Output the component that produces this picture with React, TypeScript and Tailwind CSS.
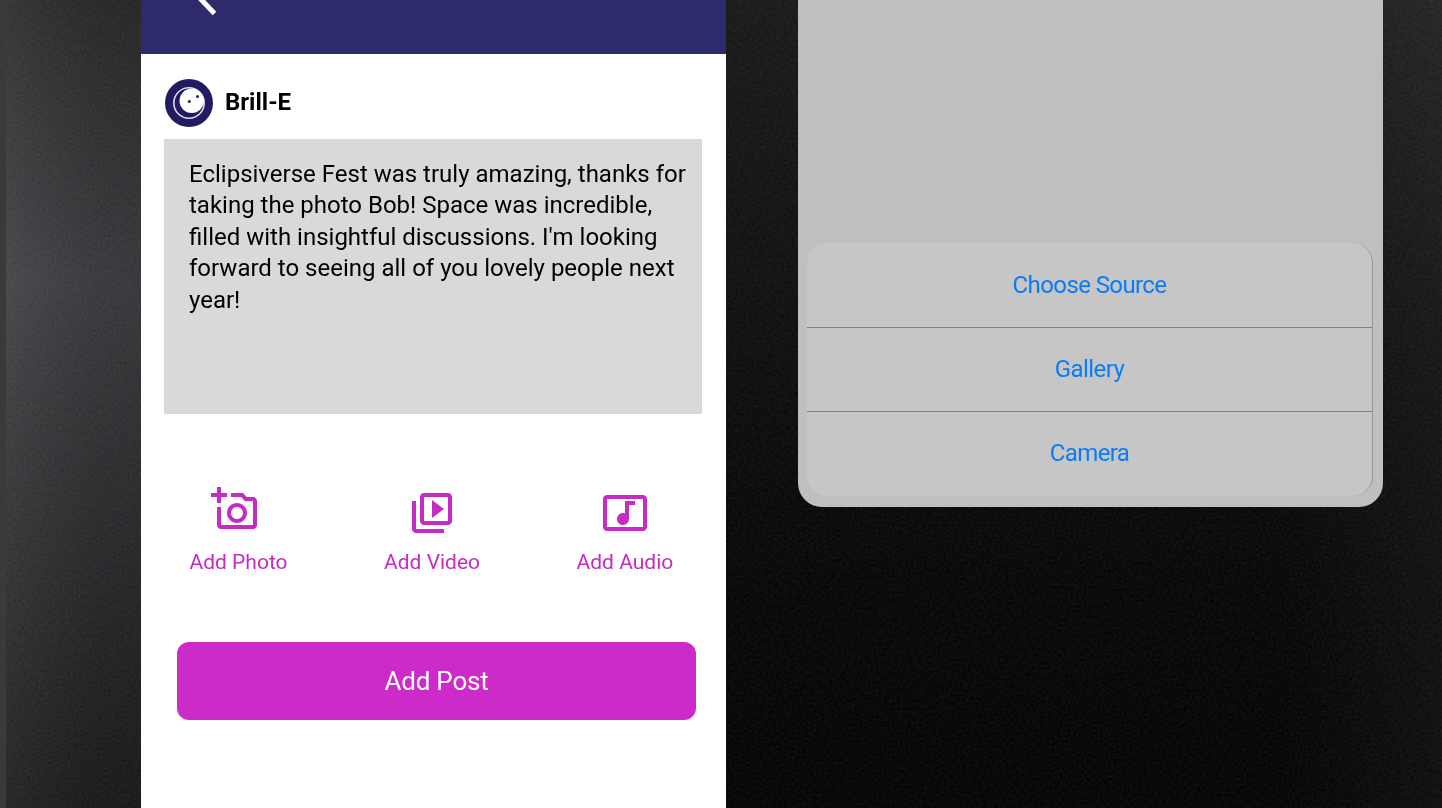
const photoPath =
  'M21 6h-3.17L16 4h-6v2h5.12l1.83 2H21v12H5v-9H3v9c0 1.1.9 2 2 2h16c1.1 0 2-.9 2-2V8c0-1.1-.9-2-2-2zM8 14c0 2.76 2.24 5 5 5s5-2.24 5-5-2.24-5-5-5-5 2.24-5 5zm5-3c1.65 0 3 1.35 3 3s-1.35 3-3 3-3-1.35-3-3 1.35-3 3-3zM5 6h3V4H5V1H3v3H0v2h3v3h2z';
const videoPath =
  'M4 6H2v14c0 1.1.9 2 2 2h14v-2H4V6zm16-4H8c-1.1 0-2 .9-2 2v12c0 1.1.9 2 2 2h12c1.1 0 2-.9 2-2V4c0-1.1-.9-2-2-2zm0 14H8V4h12v12zM12 5.5v9l6-4.5z';
const audioPath =
  'M21 3H3c-1.1 0-2 .9-2 2v14c0 1.1.9 2 2 2h18c1.1 0 2-.9 2-2V5c0-1.1-.9-2-2-2zm0 16H3V5h18v14zM8 15c0-1.66 1.34-3 3-3 .35 0 .69.07 1 .18V6h5v2h-3v7.03c-.02 1.64-1.35 2.97-3 2.97-1.66 0-3-1.34-3-3z';

function Grain() {
  return (
    <svg className="pointer-events-none absolute inset-0 h-full w-full opacity-[0.06] mix-blend-screen" aria-hidden="true">
      <filter id="grain" colorInterpolationFilters="sRGB">
        <feTurbulence type="fractalNoise" baseFrequency="0.37" numOctaves="2" seed="4" />
        <feColorMatrix values="0.6 0.2 0.2 0 0  0.2 0.6 0.2 0 0  0.2 0.2 0.6 0 0  0 0 0 0 1" />
        <feComponentTransfer>
          <feFuncR type="linear" slope="2.4" intercept="-0.7" />
          <feFuncG type="linear" slope="2.4" intercept="-0.7" />
          <feFuncB type="linear" slope="2.4" intercept="-0.7" />
        </feComponentTransfer>
      </filter>
      <rect width="100%" height="100%" filter="url(#grain)" />
    </svg>
  );
}

function Avatar() {
  return (
    <svg className="h-12 w-12" viewBox="0 0 48 48" aria-hidden="true">
      <circle cx="24" cy="24" r="24" fill="#211b61" />
      <circle cx="24" cy="24" r="15.2" fill="none" stroke="#dcdbee" strokeWidth="1.6" />
      <circle cx="26.7" cy="21.8" r="12.2" fill="#fff" />
      <circle cx="24.3" cy="22.5" r="1.5" fill="#211b61" />
      <circle cx="32.5" cy="17.6" r="1.5" fill="#211b61" />
    </svg>
  );
}

function Action({ d, label, className }: { d: string; label: string; className: string }) {
  return (
    <button className="flex flex-col items-start text-[21px] leading-[30px] text-[#c52cc4]">
      <svg className={`h-12 w-12 ${className}`} viewBox="0 0 24 24" fill="currentColor" aria-hidden="true">
        <path d={d} />
      </svg>
      {label}
    </button>
  );
}

function SheetItem({ children }: { children: string }) {
  return (
    <button className="flex h-[84px] w-full items-center justify-center text-2xl tracking-[-0.6px] text-[#0b7cf4]">
      {children}
    </button>
  );
}

export default function App() {
  return (
    <div className="relative h-[808px] w-[1442px] overflow-hidden bg-[#3a3a3a] font-['Roboto',sans-serif]">
      <div className="absolute inset-y-0 right-0 left-[6px] flex overflow-hidden rounded-tl-xl">
        <div className="w-[135px] shrink-0 bg-linear-to-b from-[#29292a] via-[#3d3e41] via-35% to-[#19191a]">
          <div className="h-full w-full bg-linear-to-r from-white/4 to-black/15" />
        </div>
        <div className="w-[657px] shrink-0 bg-linear-to-b from-[#171717] via-[#0c0c0d] via-40% to-[#010101]" />
        <div className="flex-1 bg-linear-to-b from-[#191919] via-[#060606] via-60% to-[#010101]">
          <div className="h-full w-full bg-linear-to-r from-transparent from-75% to-white/4" />
        </div>
        <Grain />
      </div>

      <div className="relative flex items-start gap-[72px] pl-[141px]">
        <main className="h-[808px] w-[585px] shrink-0 bg-white">
          <header className="h-[54.4px] bg-[#2d2b6b] pl-[51px]">
            <svg width="30" height="20" viewBox="0 0 30 20" fill="none" aria-hidden="true">
              <path d="M3 -7L22.5 13.5" stroke="#fff" strokeWidth="5" />
            </svg>
          </header>
          <div className="flex items-center gap-3 pt-[24.2px] pl-6">
            <Avatar />
            <h1 className="-mt-px text-2xl leading-8 font-bold text-black">Brill-E</h1>
          </div>
          <div className="mt-[12px] ml-[22.5px] h-[275.5px] w-[538.5px] bg-[#d9d9d9] pt-[20px] pl-[25.5px] text-2xl leading-[31.5px] text-black">
            <p className="whitespace-nowrap">
              Eclipsiverse Fest was truly amazing, thanks for
              <br />
              taking the photo Bob! Space was incredible,
              <br />
              filled with insightful discussions. I'm looking
              <br />
              forward to seeing all of you lovely people next
              <br />
              year!
            </p>
          </div>
          <div className="mt-[69px] flex h-[94px] items-end gap-[96.5px] pl-[48.5px]">
            <Action d={photoPath} label="Add Photo" className="mb-[14.5px] ml-[21.5px]" />
            <Action d={videoPath} label="Add Video" className="mb-[10px] ml-[24px]" />
            <Action d={audioPath} label="Add Audio" className="mb-[10px] ml-[24.5px]" />
          </div>
          <button className="mt-[65px] ml-9 flex h-[78px] w-[519px] items-center justify-center rounded-xl bg-[#cc2bca] text-[26px] tracking-[-0.2px] text-white">
            Add Post
          </button>
        </main>

        <aside className="h-[507px] w-[585px] shrink-0 rounded-b-[24px] bg-[#bfbfbf] pt-[243px] pl-[9px]">
          <div className="flex h-[253px] w-[566px] flex-col overflow-hidden rounded-[20px] border-r border-[#969696] bg-[#c6c6c6]">
            <SheetItem>Choose Source</SheetItem>
            <hr className="-mb-px h-px shrink-0 border-0 bg-[#808080]" />
            <SheetItem>Gallery</SheetItem>
            <hr className="-mb-px h-px shrink-0 border-0 bg-[#808080]" />
            <SheetItem>Camera</SheetItem>
          </div>
        </aside>
      </div>
    </div>
  );
}
